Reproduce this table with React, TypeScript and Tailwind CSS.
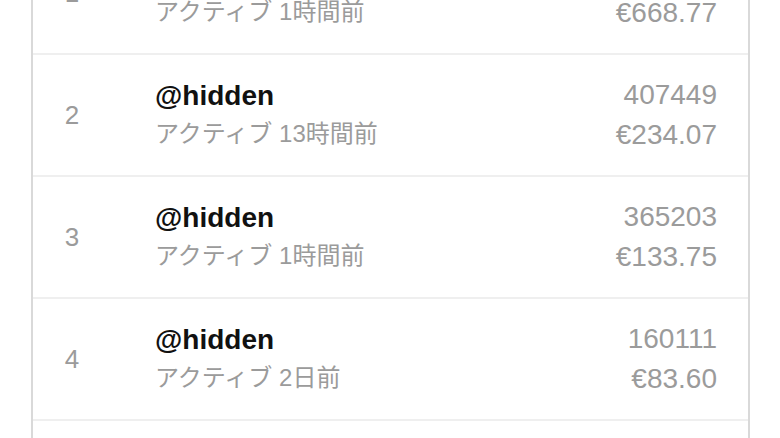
import React from 'react';

interface Row {
  rank: number;
  handle: string;
  active: string;
  score: string;
  amount: string;
}

const rows: Row[] = [
  { rank: 1, handle: '@hidden', active: 'アクティブ 1時間前', score: '512830', amount: '€668.77' },
  { rank: 2, handle: '@hidden', active: 'アクティブ 13時間前', score: '407449', amount: '€234.07' },
  { rank: 3, handle: '@hidden', active: 'アクティブ 1時間前', score: '365203', amount: '€133.75' },
  { rank: 4, handle: '@hidden', active: 'アクティブ 2日前', score: '160111', amount: '€83.60' },
  { rank: 5, handle: '@hidden', active: 'アクティブ 3日前', score: '98214', amount: '€51.20' },
];

const LeaderRow = ({ rank, handle, active, score, amount }: Row) => (
  <div className="flex items-center h-[122px] border-b-2 border-[#efefef]">
    <div className="w-[78px] text-center text-[26px] text-[#9b9b9b]">{rank}</div>
    <div className="flex-1 pl-[44px]">
      <p className="text-[28px] leading-[38px] font-bold text-[#111]">{handle}</p>
      <p className="text-[24px] leading-[38px] text-[#9b9b9b]">{active}</p>
    </div>
    <div className="pr-[31px] text-right text-[28px] leading-[40px] text-[#9b9b9b]">
      <p>{score}</p>
      <p>{amount}</p>
    </div>
  </div>
);

export default function App() {
  return (
    <div
      className="w-[780px] h-[438px] overflow-hidden bg-white"
      style={{ fontFamily: '"Liberation Sans", "Noto Sans CJK JP", sans-serif' }}
    >
      <div className="ml-[31px] w-[719px] -mt-[67px] border-x-2 border-[#d9d9d9]">
        {rows.map((r) => (
          <LeaderRow key={r.rank} {...r} />
        ))}
      </div>
    </div>
  );
}
